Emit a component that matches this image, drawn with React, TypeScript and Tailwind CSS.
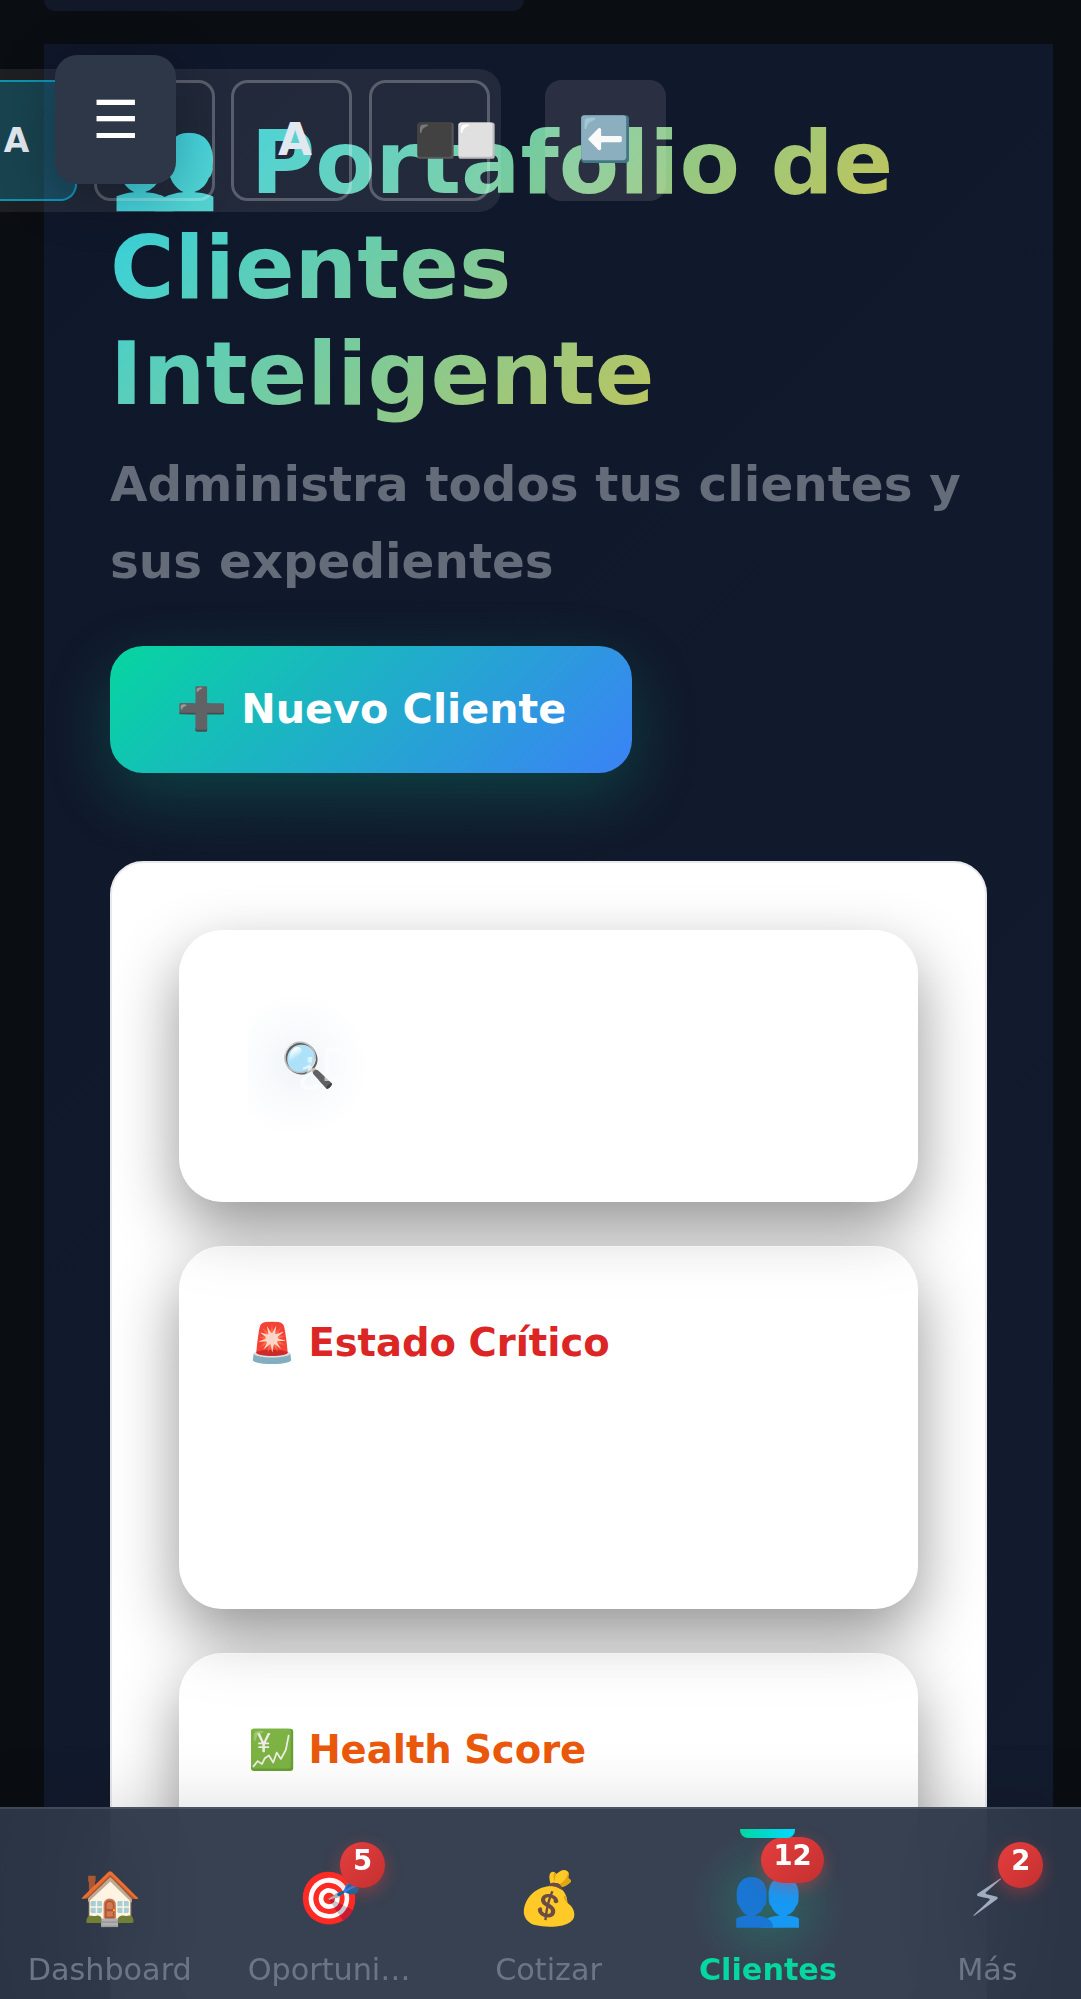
import type { ReactNode } from "react";

function ToolButton({ active, children }: { active?: boolean; children?: ReactNode }) {
  return (
    <div
      className={
        active
          ? "flex h-[121px] w-[121px] shrink-0 items-center justify-center rounded-[16.5px] border-[2.75px] border-[#06d6ff]/55 bg-[#06d6ff]/20 font-bold text-[#e2e8f0]"
          : "flex h-[121px] w-[121px] shrink-0 items-center justify-center rounded-[16.5px] border-3 border-white/25 font-bold text-[#e2e8f0]"
      }
    >
      {children}
    </div>
  );
}

function Card({ height, children }: { height: string; children?: ReactNode }) {
  return (
    <div
      className={`${height} shrink-0 rounded-[44px] border border-white/30 bg-white/45 px-[68px] shadow-[0_27px_64px_rgba(0,0,0,0.42)]`}
    >
      {children}
    </div>
  );
}

function Badge({ children }: { children: ReactNode }) {
  return (
    <span className="flex h-[46px] min-w-[45px] items-center justify-center rounded-[27px] bg-linear-135 from-[#e53e3e] to-[#c53030] px-[12.5px] pb-[8px] text-[27.5px] leading-none font-bold text-white shadow-[0_5px_16px_rgba(229,62,62,0.4)]">
      {children}
    </span>
  );
}

function NavItem({ icon, label, badge }: { icon: string; label: string; badge?: string }) {
  return (
    <div className="relative flex flex-1 flex-col items-center pt-[52px]">
      <span className="h-[75px] text-[51.5px] leading-[75px] text-[#a0aec0]">{icon}</span>
      <span className="mt-[15px] text-[30.25px] leading-[38px] text-[#6b7685]">{label}</span>
      {badge && (
        <span className="absolute top-[33px] left-[calc(50%+11px)]">
          <Badge>{badge}</Badge>
        </span>
      )}
    </div>
  );
}

export default function App() {
  return (
    <div className="relative h-[1999px] w-full overflow-hidden bg-[#0a0d11] font-['DejaVu_Sans',sans-serif]">
      <div className="flex w-[1097px] flex-col px-[44px]">
        <div className="h-[11px] w-[480px] rounded-b-[16px] bg-[#111827]" />
        <main className="mt-[33px] h-[2100px] w-[1009px] bg-[linear-gradient(135deg,#0f172a,#131c2e)] p-[66px]">
          <h1 className="w-[877px] bg-[linear-gradient(135deg,#22d3ee,#fbbf24)] bg-clip-text text-[88px] leading-[105.4px] font-bold text-transparent">
            👥 Portafolio de Clientes Inteligente
          </h1>
          <p className="mt-[20px] text-[48.4px] leading-[77.2px] font-bold text-[#646b79]">
            Administra todos tus clientes y sus expedientes
          </p>
          <button className="mt-[45.4px] flex h-[127px] w-[522px] items-center justify-center rounded-[33px] bg-[linear-gradient(135deg,#06d6a0,#3b82f6)] text-[41.25px] font-bold whitespace-pre text-white shadow-[0_22px_66px_rgba(6,214,160,0.22)]">
            ➕ Nuevo Cliente
          </button>
          <section className="mt-[88px] flex h-[1400px] w-[877px] flex-col gap-[44px] rounded-[33px] border-[2.75px] border-[#e8e8ee] bg-white px-[67px] pt-[67px]">
            <Card height="h-[272px]">
              <div className="relative flex h-full items-center">
                <div className="absolute left-0 h-[170px] w-[170px] bg-[radial-gradient(circle_at_50px_84px,#eff4f8_0px,#f8fafc_32px,transparent_72px)]" />
                <span className="relative ml-[33px] text-[43.5px]">🔍</span>
                <span className="absolute left-[49px] text-[44px] text-white/60">¿Dó</span>
              </div>
            </Card>
            <Card height="h-[363px]">
              <h2 className="pt-[71px] text-[38.5px] leading-[50px] font-bold [word-spacing:-1px] text-[#dc2626]">
                🚨 Estado Crítico
              </h2>
            </Card>
            <Card height="h-[363px]">
              <h2 className="pt-[71px] text-[38.5px] leading-[50px] font-bold [word-spacing:-1px] text-[#ea580c]">
                💹 Health Score
              </h2>
            </Card>
          </section>
        </main>
      </div>

      <div className="absolute top-[69px] left-[-55px] flex h-[143px] w-[555.5px] items-center gap-[16.5px] rounded-[22px] bg-white/8 px-[11px]">
        <ToolButton active>
          <span className="text-[33px]">A</span>
        </ToolButton>
        <ToolButton>
          <span className="text-[38px]">A</span>
        </ToolButton>
        <ToolButton>
          <span className="mb-[2px] ml-[7px] text-[44px]">A</span>
        </ToolButton>
        <ToolButton>
          <span className="ml-[54px] text-[33px] whitespace-nowrap">⬛⬜</span>
        </ToolButton>
      </div>
      <div className="absolute top-[80px] left-[544.5px] flex h-[121px] w-[121px] items-center justify-center rounded-[16.5px] bg-[#fff5f5]/11 pr-[1px] pb-[2px] text-[43.5px]">
        ⬅️
      </div>
      <button className="absolute top-[55px] left-[55px] flex h-[129px] w-[121px] items-center justify-center rounded-[22px] bg-[#2d3748] pt-[2px] text-[52.5px] text-white shadow-[0_11px_55px_rgba(0,0,0,0.3)]">
        ☰
      </button>

      <nav className="absolute top-[1806.5px] left-0 flex h-[193px] w-[1097px] border-t-[2.75px] border-white/10 bg-[#2d3748]/95 shadow-[0_-11px_55px_rgba(0,0,0,0.1)] backdrop-blur-[55px]">
        <NavItem icon="🏠" label="Dashboard" />
        <NavItem icon="🎯" label="Oportuni…" badge="5" />
        <NavItem icon="💰" label="Cotizar" />
        <div className="relative flex flex-1 flex-col items-center pt-[50px]">
          <div className="absolute top-[-15px] h-[220px] w-[220px] bg-[radial-gradient(circle,rgba(6,214,160,0.25)_0px,rgba(6,214,160,0.1)_40px,transparent_76px)]" />
          <span className="relative h-[75px] text-[57px] leading-[75px]">👥</span>
          <span className="relative mt-[17px] text-[30.25px] leading-[38px] font-bold text-[#06d6a0]">Clientes</span>
          <span className="absolute top-[28px] left-[calc(50%-7px)]">
            <Badge>12</Badge>
          </span>
          <span className="absolute top-[20px] h-[9px] w-[55px] rounded-b-[8px] bg-linear-to-r from-[#06d6a0] to-[#00d9ff]" />
        </div>
        <NavItem icon="⚡︎" label="Más" badge="2" />
      </nav>
    </div>
  );
}
